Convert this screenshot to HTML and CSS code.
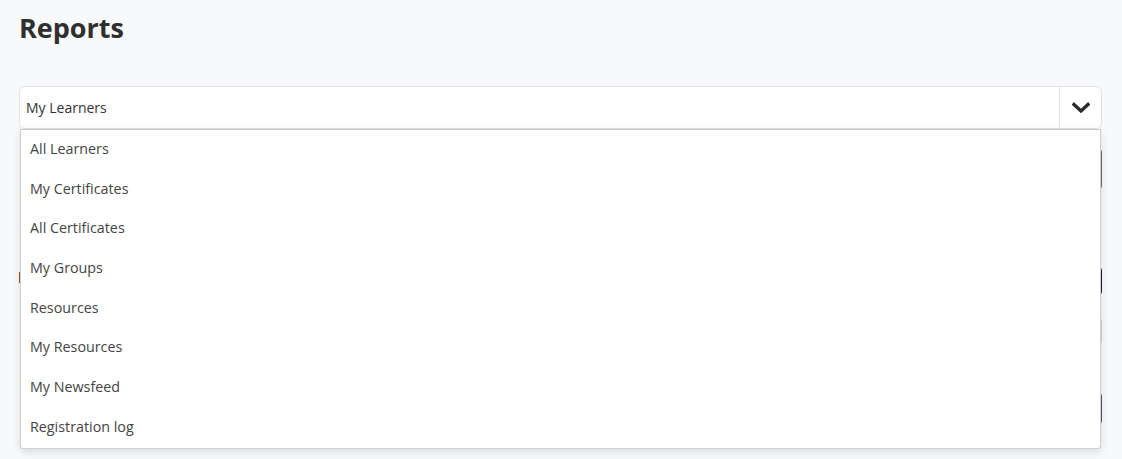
FILE: index.html
```html
<!DOCTYPE html>
<html lang="en">
<head>
<meta charset="utf-8">
<title>Reports</title>
<link rel="stylesheet" href="styles.css">
</head>
<body>
<main class="page">
  <h1 class="title">Reports</h1>
  <div class="select-wrap">
    <div class="select">
      <span class="select-value">My Learners</span>
      <span class="select-toggle">
        <svg width="18" height="12" viewBox="0 0 18 12" aria-hidden="true"><path d="M2 2.5 L9 9 L16 2.5" fill="none" stroke="#2b2b2b" stroke-width="3.4" stroke-linecap="square"/></svg>
      </span>
    </div>
    <ul class="menu">
      <li>All Learners</li>
      <li>My Certificates</li>
      <li>All Certificates</li>
      <li>My Groups</li>
      <li>Resources</li>
      <li>My Resources</li>
      <li>My Newsfeed</li>
      <li>Registration log</li>
    </ul>
  </div>
  <div class="behind">
    <div class="field field-dark"></div>
    <div class="row">
      <span class="tag"></span>
      <span class="btn"></span>
    </div>
    <div class="field field-light"></div>
    <div class="field field-mid"></div>
  </div>
</main>
</body>
</html>
```
FILE: styles.css
```css
* { box-sizing: border-box; }
html, body { margin: 0; padding: 0; }
body {
  background: #f8f9fb;
  font-family: "Open Sans", "Noto Sans", sans-serif;
  color: #333;
  overflow: hidden;
}
.page {
  padding: 0 20px 0 19px;
  height: 459px;
}
.title {
  margin: 0;
  padding-top: 10px;
  font-size: 27px;
  line-height: 36px;
  font-weight: 700;
  color: #2f2f2f;
  height: 86px;
}
.select-wrap {
  position: relative;
}
.select {
  display: flex;
  align-items: center;
  height: 43px;
  background: #fff;
  border: 1px solid #e2e2e6;
  border-radius: 6px;
}
.select-value {
  flex: 1;
  padding-left: 6px;
  font-size: 14px;
  color: #333;
}
.select-toggle {
  width: 42px;
  height: 100%;
  display: flex;
  align-items: center;
  justify-content: center;
  border-left: 1px solid #e4e4e4;
}
.menu {
  position: absolute;
  z-index: 5;
  top: 43px;
  left: 1px;
  right: 1px;
  margin: 0;
  padding: 0;
  list-style: none;
  background: #fff;
  border: 1px solid #cfcfcf;
  border-top-color: #c8c8c8;
  border-radius: 0 0 3px 3px;
  box-shadow: 0 3px 8px rgba(0,0,0,0.12);
}
.menu li {
  height: 39.7px;
  line-height: 38px;
  padding-left: 9px;
  font-size: 14.3px;
  color: #444;
}
.behind {
  display: flex;
  flex-direction: column;
}
.field {
  margin-left: 4px;
  border: 1px solid #6e6e6e;
  border-radius: 4px;
  background: #fff;
}
.field-dark { margin-top: 19px; height: 42px; }
.row {
  display: flex;
  justify-content: space-between;
  align-items: flex-start;
  margin-top: 77px;
  height: 30px;
}
.tag {
  width: 2px;
  height: 11px;
  margin-top: 5px;
  background: #a0541c;
}
.btn {
  width: 120px;
  height: 28px;
  border-radius: 4px;
  background: #2a1540;
}
.field-light { margin-top: 20px; height: 28px; border-color: #d4d4da; }
.field-mid { margin-top: 47px; height: 33px; border-color: #5c5668; }
```
